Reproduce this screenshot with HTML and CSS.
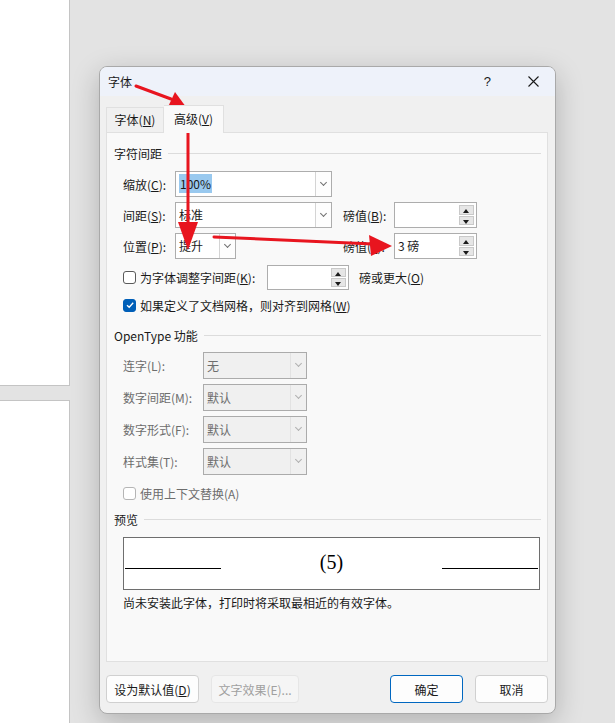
FILE: index.html
```html
<!DOCTYPE html>
<html lang="zh-CN">
<head>
    <meta charset="UTF-8">
    <title>字体</title>
    <link rel="stylesheet" href="styles.css">
</head>
<body>
    <div class="desk">
        <!-- 背后的文档页面 -->
        <div class="doc">
            <div class="page page-top"></div>
            <div class="page page-bottom"></div>
        </div>

        <div class="dialog">
            <div class="titlebar">
                <span class="title">字体</span>
                <span class="help">?</span>
                <svg class="close" width="11" height="11" viewBox="0 0 11 11">
                    <path d="M0.5 0.5 L10.5 10.5 M10.5 0.5 L0.5 10.5" stroke="#1a1a1a" stroke-width="1.1" fill="none"/>
                </svg>
            </div>

            <div class="tabs">
                <div class="tab">字体(<u>N</u>)</div>
                <div class="tab active">高级(<u>V</u>)</div>
            </div>

            <div class="panel">
                <!-- 字符间距 -->
                <div class="group-head head-1"><span>字符间距</span><i></i></div>
                <div class="spacing-grid">
                    <label class="lbl">缩放(<u>C</u>):</label>
                    <div class="combo wide"><span class="val"><span class="sel">100%</span></span><span class="drop"></span></div>
                    <span></span><span></span>

                    <label class="lbl">间距(<u>S</u>):</label>
                    <div class="combo wide"><span class="val">标准</span><span class="drop"></span></div>
                    <label class="lbl pt">磅值(<u>B</u>):</label>
                    <div class="spin"><span class="val"></span><span class="arrows"><b class="up"></b><b class="down"></b></span></div>

                    <label class="lbl">位置(<u>P</u>):</label>
                    <div class="combo short"><span class="val">提升</span><span class="drop"></span></div>
                    <label class="lbl pt">磅值(<u>Y</u>):</label>
                    <div class="spin"><span class="val">3 磅</span><span class="arrows"><b class="up"></b><b class="down"></b></span></div>
                </div>

                <div class="kern-row">
                    <label class="check-label kern-label"><span class="box"></span>为字体调整字间距(<u>K</u>):</label>
                    <div class="spin small"><span class="val"></span><span class="arrows"><b class="up"></b><b class="down"></b></span></div>
                    <span class="kern-after">磅或更大(<u>O</u>)</span>
                </div>

                <label class="check-label grid-check">
                    <span class="box checked">
                        <svg width="10" height="10" viewBox="0 0 10 10"><path d="M2 5.2 L4.2 7.3 L8.2 2.8" stroke="#fff" stroke-width="1.3" fill="none"/></svg>
                    </span>如果定义了文档网格，则对齐到网格(<u>W</u>)
                </label>

                <!-- OpenType 功能 -->
                <div class="group-head head-2"><span>OpenType 功能</span><i></i></div>
                <div class="ot-grid">
                    <label class="lbl off">连字(L):</label>
                    <div class="combo ot"><span class="val">无</span><span class="drop"></span></div>
                    <label class="lbl off">数字间距(M):</label>
                    <div class="combo ot"><span class="val">默认</span><span class="drop"></span></div>
                    <label class="lbl off">数字形式(F):</label>
                    <div class="combo ot"><span class="val">默认</span><span class="drop"></span></div>
                    <label class="lbl off">样式集(T):</label>
                    <div class="combo ot"><span class="val">默认</span><span class="drop"></span></div>
                </div>
                <label class="check-label ctx-check off"><span class="box off"></span>使用上下文替换(A)</label>

                <!-- 预览 -->
                <div class="group-head head-3"><span>预览</span><i></i></div>
                <div class="preview">
                    <div class="rule"></div>
                    <div class="sample">(5)</div>
                    <div class="rule"></div>
                </div>
                <p class="note">尚未安装此字体，打印时将采取最相近的有效字体。</p>
            </div>

            <div class="footer">
                <button class="btn btn-default">设为默认值(<u>D</u>)</button>
                <button class="btn btn-effect" disabled>文字效果(E)...</button>
                <span class="spacer"></span>
                <button class="btn btn-ok">确定</button>
                <button class="btn btn-cancel">取消</button>
            </div>
        </div>
    </div>

    <!-- 红色标注箭头 -->
    <svg class="marks" width="615" height="723" viewBox="0 0 615 723">
        <g stroke="#e8151f" stroke-width="3" fill="#e8151f" stroke-linecap="round">
            <line x1="136" y1="86" x2="171" y2="99"/>
            <polygon points="167,109 175,92 186,107" stroke="none"/>
            <line x1="188" y1="130" x2="188" y2="224"/>
            <polygon points="178,222 198,222 188,250" stroke="none"/>
            <line x1="214" y1="237" x2="373" y2="244"/>
            <polygon points="369,235 371,256 392,246" stroke="none"/>
        </g>
    </svg>
</body>
</html>
```

FILE: styles.css
```css
* {
    box-sizing: border-box;
    margin: 0;
    padding: 0;
}
body {
    width: 615px;
    height: 723px;
    overflow: hidden;
    background-color: #e3e3e3;
    font-family: "Noto Sans CJK SC", "Liberation Sans", sans-serif;
    font-size: 12px;
    color: #1a1a1a;
    position: relative;
}
u {
    text-decoration: underline;
    text-underline-offset: 1px;
}
.desk {
    display: flex;
    align-items: flex-start;
}
.doc {
    width: 70px;
    height: 723px;
    display: flex;
    flex-direction: column;
    gap: 14px;
}
.page {
    background-color: #fff;
    border-right: 1px solid #c4c4c4;
}
.page-top {
    height: 386px;
    border-bottom: 1px solid #c4c4c4;
}
.page-bottom {
    flex: 1;
    border-top: 1px solid #c4c4c4;
}

/* 对话框 */
.dialog {
    width: 457px;
    height: 648px;
    margin: 66px 0 0 29px;
    background-color: #f0f0f0;
    border: 1px solid #a9a9a9;
    border-radius: 8px;
    box-shadow: 0 8px 28px rgba(0,0,0,0.22);
    overflow: hidden;
    display: flex;
    flex-direction: column;
}
.titlebar {
    height: 29px;
    background-color: #eef2fa;
    display: flex;
    align-items: center;
    padding: 0 16px 0 8px;
}
.title {
    flex: 1;
}
.help {
    font-family: "Liberation Sans", sans-serif;
    font-size: 13px;
    margin-right: 37px;
}
.tabs {
    display: flex;
    align-items: flex-end;
    margin: 9px 0 0 6px;
    position: relative;
    z-index: 1;
}
.tab {
    height: 25px;
    width: 58px;
    line-height: 24px;
    text-align: center;
    border: 1px solid #e0e0e0;
    border-bottom: none;
    background-color: #f0f0f0;
}
.tab.active {
    height: 28px;
    width: 60px;
    line-height: 26px;
    background-color: #f9f9f9;
    margin-bottom: -1px;
    border-left: none;
}
.panel {
    height: 530px;
    margin: 0 7px 0 6px;
    background-color: #f9f9f9;
    border: 1px solid #e0e0e0;
    padding: 0 6px 0 7px;
}

/* 分组标题 */
.group-head {
    display: flex;
    align-items: center;
    height: 16px;
    gap: 6px;
}
.group-head i {
    flex: 1;
    border-top: 1px solid #dcdcdc;
}
.head-1 { margin-top: 12px; }
.head-2 { margin-top: 14px; }
.head-3 { margin-top: 10px; }

.lbl {
    display: flex;
    align-items: center;
    white-space: nowrap;
}
.lbl.off, .check-label.off {
    color: #6d6d6d;
}

.spacing-grid {
    display: grid;
    grid-template-columns: 52px 157px 62px 83px;
    grid-template-rows: repeat(3, 26px);
    row-gap: 5px;
    margin: 10px 0 0 9px;
}
.spacing-grid .pt {
    padding-left: 11px;
}

/* 下拉框 */
.combo {
    display: flex;
    height: 26px;
    background-color: #fff;
    border: 1px solid #adadad;
}
.combo.wide { width: 157px; }
.combo.short { width: 61px; }
.combo .val {
    flex: 1;
    padding-left: 3px;
    line-height: 24px;
    white-space: nowrap;
}
.combo .sel {
    background-color: #99c9ef;
    padding: 1px 1px;
}
.combo .drop {
    width: 16px;
    border-left: 1px solid #d4d4d4;
    background-color: #fdfdfd;
    position: relative;
}
.combo .drop::after {
    content: "";
    position: absolute;
    left: 5px;
    top: 8px;
    width: 4px;
    height: 4px;
    border-right: 1px solid #707070;
    border-bottom: 1px solid #707070;
    transform: rotate(45deg);
}
.combo.ot {
    width: 104px;
    height: 27px;
    background-color: #f0f0f0;
    border-color: #ababab;
    color: #6d6d6d;
}
.combo.ot .val {
    line-height: 25px;
}
.combo.ot .drop {
    background-color: #f0f0f0;
    border-left-color: #e2e2e2;
}
.combo.ot .drop::after {
    border-color: #b0b0b0;
}

/* 数值框 */
.spin {
    display: flex;
    width: 83px;
    height: 26px;
    background-color: #fff;
    border: 1px solid #adadad;
    padding: 2px;
}
.spin.small {
    width: 82px;
    height: 25px;
}
.spin .val {
    flex: 1;
    line-height: 20px;
    padding-left: 1px;
}
.arrows {
    width: 15px;
    display: flex;
    flex-direction: column;
    gap: 1px;
}
.arrows b {
    flex: 1;
    background-color: #e6e6e6;
    border: 1px solid #c9c9c9;
    position: relative;
}
.arrows b::after {
    content: "";
    position: absolute;
    left: 3px;
    top: 3px;
    border-left: 3.5px solid transparent;
    border-right: 3.5px solid transparent;
}
.arrows .up::after {
    border-bottom: 4px solid #1a1a1a;
}
.arrows .down::after {
    border-top: 4px solid #1a1a1a;
}

/* 复选框 */
.check-label {
    display: flex;
    align-items: center;
    height: 16px;
    white-space: nowrap;
}
.box {
    width: 13px;
    height: 13px;
    border: 1px solid #5a5a5a;
    border-radius: 3px;
    background-color: #fff;
    margin-right: 4px;
    display: flex;
    align-items: center;
    justify-content: center;
}
.box.checked {
    background-color: #005fb8;
    border-color: #005fb8;
}
.box.off {
    border-color: #b5b5b5;
}
.kern-row {
    display: flex;
    align-items: center;
    height: 25px;
    margin: 6px 0 0 9px;
}
.kern-label {
    width: 144px;
}
.kern-after {
    margin-left: 10px;
}
.grid-check {
    margin: 7px 0 0 9px;
}

.ot-grid {
    display: grid;
    grid-template-columns: 80px 104px;
    grid-template-rows: repeat(4, 27px);
    row-gap: 5px;
    margin: 9px 0 0 9px;
}
.ctx-check {
    margin: 10px 0 0 9px;
}

/* 预览 */
.preview {
    height: 53px;
    margin: 10px 1px 0 9px;
    background-color: #fff;
    border: 1px solid #6e6e6e;
    display: flex;
    align-items: flex-start;
    padding: 0 1px;
}
.rule {
    width: 96px;
    margin-top: 30px;
    border-top: 1.5px solid #000;
}
.sample {
    flex: 1;
    text-align: center;
    font-family: "Liberation Serif", serif;
    font-size: 20px;
    line-height: 26px;
    margin-top: 11px;
    color: #000;
}
.note {
    margin: 5px 0 0 9px;
    line-height: 16px;
}

/* 底部按钮 */
.footer {
    display: flex;
    gap: 12px;
    margin: 13px 7px 0 6px;
}
.btn {
    height: 28px;
    font-family: inherit;
    font-size: 12px;
    color: #1a1a1a;
    background-color: #fdfdfd;
    border: 1px solid #d0d0d0;
    border-radius: 4px;
}
.btn-default { width: 93px; }
.btn-effect {
    width: 88px;
    color: #a0a0a0;
    background-color: #f5f5f5;
    border-color: #e6e6e6;
}
.spacer { flex: 1; }
.btn-ok {
    width: 73px;
    border-color: #0067c0;
}
.btn-cancel { width: 73px; }

.marks {
    position: absolute;
    top: 0;
    left: 0;
    pointer-events: none;
}
```
